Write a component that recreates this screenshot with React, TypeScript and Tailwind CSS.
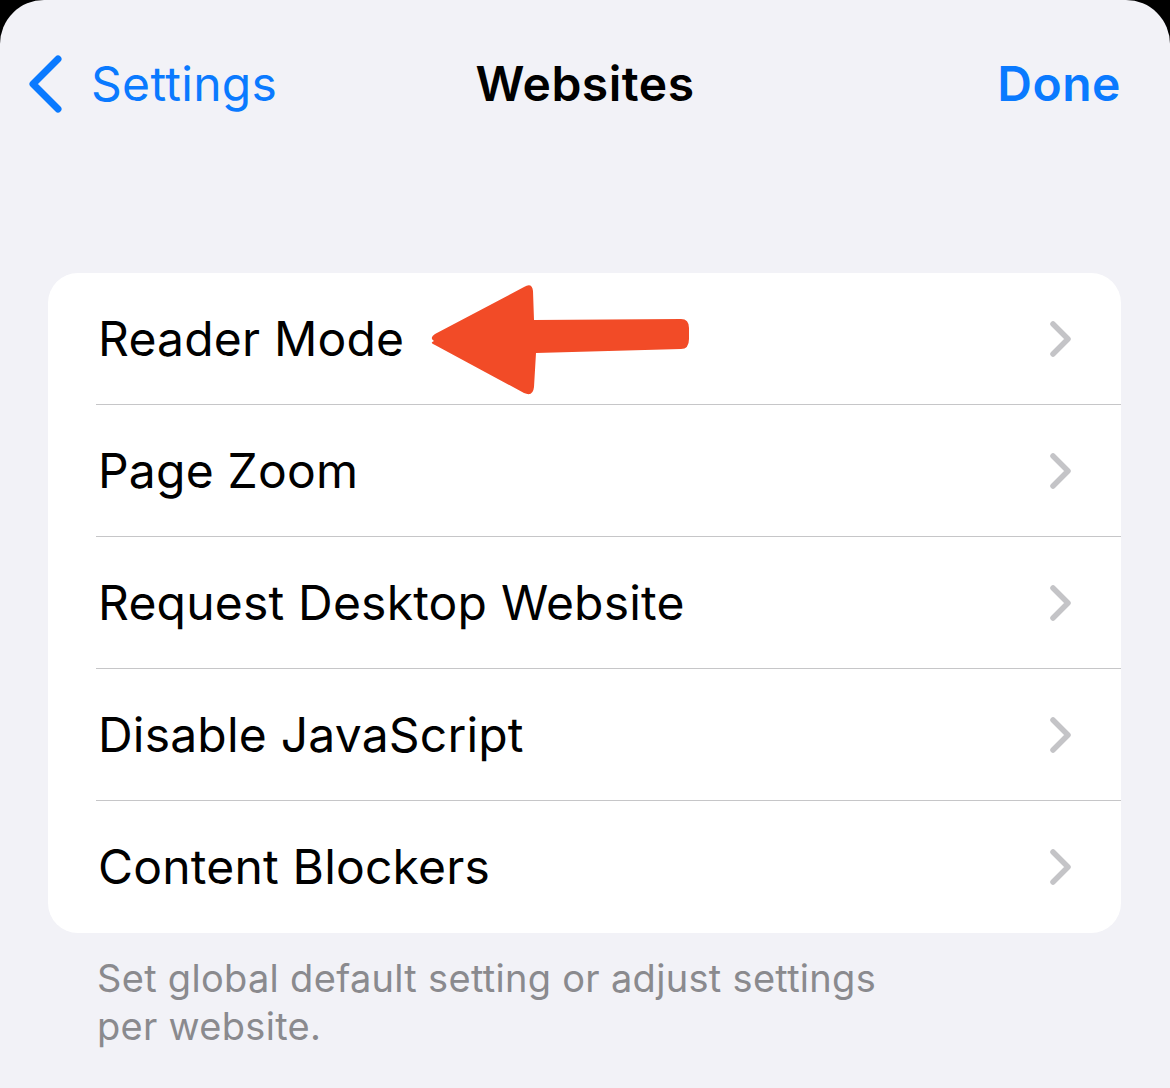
const rows = [
  "Reader Mode",
  "Page Zoom",
  "Request Desktop Website",
  "Disable JavaScript",
  "Content Blockers",
];

function Chevron() {
  return (
    <svg width="26" height="38" viewBox="0 0 26 38" fill="none">
      <path
        d="M5 4 L20 19 L5 34"
        stroke="#c4c4c7"
        strokeWidth="5.5"
        strokeLinecap="round"
        strokeLinejoin="round"
      />
    </svg>
  );
}

function Arrow() {
  return (
    <svg
      width="270"
      height="124"
      viewBox="0 0 270 124"
      className="absolute left-[424px] top-[4px]"
    >
      <path
        d="M10 64 Q5 61 11 57 L100 10 Q108 5 109 14 L110 43 L257 42 Q265 42 265 51 L265 62 Q265 72 257 72 L112 76 L110 110 Q109 120 100 116 L11 68 Q5 66 10 64 Z"
        fill="#f24b27"
      />
    </svg>
  );
}

export default function App() {
  return (
    <div className="w-[1170px] h-[1088px] bg-black font-['Inter',sans-serif]">
      <div className="h-full bg-[#f2f2f7] rounded-t-[44px]">
        {/* nav bar */}
        <div className="relative flex items-center justify-between h-[168px] pl-[28px] pr-[49px]">
          <div className="flex items-center gap-x-[28px] text-[#0a7aff]">
            <svg width="35" height="58" viewBox="0 0 35 58" fill="none">
              <path
                d="M30 4 L5 29 L30 54"
                stroke="#0a7aff"
                strokeWidth="7"
                strokeLinecap="round"
                strokeLinejoin="round"
              />
            </svg>
            <span className="text-[48px] tracking-[0.3px]">Settings</span>
          </div>
          <span className="absolute left-0 right-0 text-center text-[48px] font-semibold text-black tracking-[0.5px] pointer-events-none">
            Websites
          </span>
          <span className="text-[48px] font-semibold text-[#0a7aff] tracking-[0.5px]">
            Done
          </span>
        </div>

        {/* list card */}
        <div className="mt-[105px] ml-[48px] mr-[49px] bg-white rounded-[30px] overflow-hidden">
          {rows.map((label, i) => (
            <div key={label} className="relative flex items-center h-[132px] pl-[98px] -ml-[48px]">
              <div
                className={
                  "absolute left-[96px] right-0 bottom-0 h-px " +
                  (i < rows.length - 1 ? "bg-[#c6c6c8]" : "bg-transparent")
                }
              />
              <span className="flex-1 text-[48px] text-black tracking-[0.2px]">{label}</span>
              <div className="pr-[47px]">
                <Chevron />
              </div>
              {i === 0 && <Arrow />}
            </div>
          ))}
        </div>

        {/* footer */}
        <p className="mt-[21px] ml-[97px] w-[840px] text-[38px] leading-[48px] text-[#8a8a8e] tracking-[0.3px]">
          Set global default setting or adjust settings per website.
        </p>
      </div>
    </div>
  );
}
